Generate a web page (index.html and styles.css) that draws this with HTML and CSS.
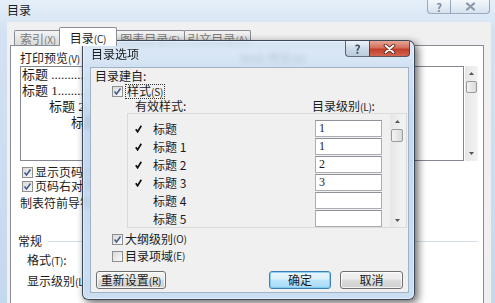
FILE: index.html
```html
<!DOCTYPE html>
<html lang="zh-CN">
<head>
  <meta charset="UTF-8">
  <title>目录</title>
  <link rel="stylesheet" href="styles.css">
</head>
<body>
  <div class="window">
    <div class="titlebar">
      <span class="title">目录</span>
      <div class="caption">
        <span class="cap help">?</span>
        <span class="cap close">
          <svg width="11" height="9" viewBox="0 0 11 9"><path d="M2 1.5 L9 7.5 M9 1.5 L2 7.5" stroke="#8a97a8" stroke-width="2.2" stroke-linecap="round"/></svg>
        </span>
      </div>
    </div>
    <div class="client">
      <div class="tabs">
        <span class="tab t1">索引<span class="key">(X)</span></span>
        <span class="tab active">目录<span class="key">(C)</span></span>
        <span class="tab t3">图表目录<span class="key">(F)</span></span>
        <span class="tab t4">引文目录<span class="key">(A)</span></span>
      </div>
      <div class="panel">
        <div class="preview-cols">
          <div class="col-print">
            <div class="label">打印预览<span class="key">(V)</span></div>
            <div class="preview">
              <div class="pline">标题 ..............................................</div>
              <div class="pline">标题 1...........................................</div>
              <div class="pline lv2">标题 2...................................</div>
              <div class="pline lv3">标题 3..............................</div>
            </div>
          </div>
          <div class="col-web">
            <div class="label">Web 预览<span class="key">(W)</span></div>
            <div class="web-row">
              <div class="preview web"></div>
              <div class="vscroll outer">
                <span class="arrow"><svg width="5" height="3" viewBox="0 0 5 3"><path d="M0 3 L2.5 0 L5 3Z" fill="#555"/></svg></span>
                <span class="thumb"></span>
                <span class="track"></span>
                <span class="arrow"><svg width="5" height="3" viewBox="0 0 5 3"><path d="M0 0 L2.5 3 L5 0Z" fill="#555"/></svg></span>
              </div>
            </div>
          </div>
        </div>
        <div class="options">
          <div class="check first"><span class="box"><svg width="9" height="9" viewBox="0 0 9 9"><path d="M1.5 4.5 L3.5 7 L7.5 1.5" fill="none" stroke="#3d5a8c" stroke-width="1.5"/></svg></span>显示页码<span class="key">(S)</span></div>
          <div class="check"><span class="box"><svg width="9" height="9" viewBox="0 0 9 9"><path d="M1.5 4.5 L3.5 7 L7.5 1.5" fill="none" stroke="#3d5a8c" stroke-width="1.5"/></svg></span>页码右对齐<span class="key">(R)</span></div>
          <div class="plain leader">制表符前导符<span class="key">(B)</span>:</div>
        </div>
        <div class="group">常规</div>
        <div class="field">格式<span class="key">(T)</span>:</div>
        <div class="field second">显示级别<span class="key">(L)</span>:</div>
      </div>
    </div>
  </div>

  <div class="dialog">
    <div class="dlg-title">
      <span class="dlg-name">目录选项</span>
      <div class="dlg-caption">
        <span class="dbtn help">?</span>
        <span class="dbtn close">
          <svg width="13" height="10" viewBox="0 0 13 10"><path d="M2.5 1.5 L10.5 8.5 M10.5 1.5 L2.5 8.5" stroke="#5a1d14" stroke-width="3.6" stroke-linecap="round"/><path d="M2.5 1.5 L10.5 8.5 M10.5 1.5 L2.5 8.5" stroke="#fff" stroke-width="1.9" stroke-linecap="round"/></svg>
        </span>
      </div>
    </div>
    <div class="dlg-body">
      <div class="plain">目录建自:</div>
      <div class="check indent tight"><span class="box"><svg width="9" height="9" viewBox="0 0 9 9"><path d="M1.5 4.5 L3.5 7 L7.5 1.5" fill="none" stroke="#3d5a8c" stroke-width="1.5"/></svg></span><span class="focus">样式<span class="key">(S)</span></span></div>
      <div class="cols-head"><span class="h-style">有效样式:</span><span>目录级别<span class="key">(L)</span>:</span></div>
      <div class="style-list">
        <div class="style-rows">
          <div class="srow"><span class="mark"><svg width="7" height="8" viewBox="0 0 7 8"><path d="M0.8 4.2 L2.6 6.8 L6.3 0.8" fill="none" stroke="#111" stroke-width="1.7"/></svg></span><span class="sname">标题</span><span class="level">1</span></div>
          <div class="srow"><span class="mark"><svg width="7" height="8" viewBox="0 0 7 8"><path d="M0.8 4.2 L2.6 6.8 L6.3 0.8" fill="none" stroke="#111" stroke-width="1.7"/></svg></span><span class="sname">标题 1</span><span class="level">1</span></div>
          <div class="srow"><span class="mark"><svg width="7" height="8" viewBox="0 0 7 8"><path d="M0.8 4.2 L2.6 6.8 L6.3 0.8" fill="none" stroke="#111" stroke-width="1.7"/></svg></span><span class="sname">标题 2</span><span class="level">2</span></div>
          <div class="srow"><span class="mark"><svg width="7" height="8" viewBox="0 0 7 8"><path d="M0.8 4.2 L2.6 6.8 L6.3 0.8" fill="none" stroke="#111" stroke-width="1.7"/></svg></span><span class="sname">标题 3</span><span class="level">3</span></div>
          <div class="srow"><span class="mark"></span><span class="sname">标题 4</span><span class="level"></span></div>
          <div class="srow"><span class="mark"></span><span class="sname">标题 5</span><span class="level"></span></div>
        </div>
        <div class="vscroll inner">
          <span class="arrow"><svg width="5" height="3" viewBox="0 0 5 3"><path d="M0 3 L2.5 0 L5 3Z" fill="#555"/></svg></span>
          <span class="thumb"></span>
          <span class="track"></span>
          <span class="arrow"><svg width="5" height="3" viewBox="0 0 5 3"><path d="M0 0 L2.5 3 L5 0Z" fill="#555"/></svg></span>
        </div>
      </div>
      <div class="check indent after-list"><span class="box"><svg width="9" height="9" viewBox="0 0 9 9"><path d="M1.5 4.5 L3.5 7 L7.5 1.5" fill="none" stroke="#3d5a8c" stroke-width="1.5"/></svg></span>大纲级别<span class="key">(O)</span></div>
      <div class="check indent next"><span class="box"></span>目录项域<span class="key">(E)</span></div>
      <div class="btn-row">
        <button class="btn reset">重新设置<span class="key">(R)</span></button>
        <button class="btn ok">确定</button>
        <button class="btn cancel">取消</button>
      </div>
    </div>
  </div>
</body>
</html>
```

FILE: styles.css
```css
* {
  box-sizing: border-box;
}

body {
  margin: 0;
  width: 495px;
  height: 303px;
  overflow: hidden;
  position: relative;
  font-family: "Noto Sans CJK SC", "Noto Sans", sans-serif;
  font-size: 12px;
  line-height: 14px;
  color: #1b1b1b;
  background: #c4d8ee;
}

/* accelerator keys such as (C) are narrow in the original font */
.key {
  font-size: 10px;
  letter-spacing: -0.2px;
}

/* outer window */
.window {
  height: 303px;
  display: flex;
  flex-direction: column;
  background: linear-gradient(180deg, #e6eff9 0%, #d3e2f3 10%, #c4d8ee 100%);
}

.titlebar {
  height: 22px;
  display: flex;
  padding: 0 5px 0 7px;
}

.titlebar .title {
  margin-top: 3px;
}

.caption {
  display: flex;
  margin-left: auto;
  height: 14px;
}

.cap {
  height: 14px;
  display: flex;
  align-items: center;
  justify-content: center;
  border: 1px solid rgba(86, 109, 140, 0.55);
  border-top: none;
  background: linear-gradient(#f3f7fb, #d6e2ef);
  color: #7d8a9c;
  font-weight: bold;
  font-size: 11px;
}

.cap.help {
  width: 23px;
  border-right: none;
  border-radius: 0 0 0 4px;
}

.cap.close {
  width: 40px;
  border-radius: 0 0 4px 0;
}

.client {
  flex: 1;
  margin: 0 4px 0 7px;
  background: #f0f0f0;
  display: flex;
  flex-direction: column;
  overflow: hidden;
}

/* tabs */
.tabs {
  height: 23px;
  display: flex;
  align-items: flex-end;
  padding-left: 7px;
}

.tab {
  height: 15px;
  padding-top: 1px;
  line-height: 13px;
  text-align: center;
  white-space: nowrap;
  border: 1px solid #898c95;
  border-bottom: none;
  border-radius: 2px 2px 0 0;
  margin-right: -1px;
  background: linear-gradient(#f4f4f4, #e6e6e6 50%, #d9d9d9);
  color: #7b7b7b;
}

.tab.t1 { width: 48px; }
.tab.t3 { width: 70px; }
.tab.t4 { width: 67px; }

.tab.active {
  width: 58px;
  height: 19px;
  padding-top: 2px;
  line-height: 16px;
  margin: 0 -2px -1px -2px;
  position: relative;
  z-index: 1;
  background: #fff;
  color: #1b1b1b;
}

.panel {
  flex: 1;
  margin-left: 3px;
  width: 474px;
  border: 1px solid #898c95;
  border-bottom: none;
  background: #fff;
  padding: 5px 0 0 9px;
  display: flex;
  flex-direction: column;
}

.preview-cols {
  display: flex;
}

.col-print {
  width: 218px;
}

.col-web {
  margin-left: 2px;
}

.label {
  height: 14px;
  white-space: nowrap;
}

.preview {
  margin-top: 1px;
  height: 95px;
  border: 1px solid #828790;
  background: #fff;
  padding-left: 1px;
  overflow: hidden;
  white-space: nowrap;
  font-family: "Liberation Serif", "Noto Sans CJK SC", serif;
  font-size: 13px;
  line-height: 16px;
}

.pline.lv2 { padding-left: 27px; }
.pline.lv3 { padding-left: 49px; }

.web-row {
  display: flex;
}

.preview.web {
  width: 224px;
}

/* scrollbars */
.vscroll {
  display: flex;
  flex-direction: column;
  background: linear-gradient(90deg, #e6e6e6, #f3f3f3);
}

.vscroll.outer {
  margin-top: 1px;
  margin-left: 1px;
  width: 13px;
  height: 95px;
}

.vscroll .arrow {
  height: 15px;
  display: flex;
  align-items: center;
  justify-content: center;
}

.vscroll .thumb {
  height: 12px;
  margin: 0 1px;
  border: 1px solid #9a9a9a;
  border-radius: 2px;
  background: linear-gradient(90deg, #f4f4f4, #dadada);
}

.vscroll .track {
  flex: 1;
}

/* checkboxes */
.options {
  padding-left: 2px;
}

.check {
  height: 14px;
  display: flex;
  align-items: center;
  white-space: nowrap;
}

.check.first {
  margin-top: 4px;
}

.box {
  width: 11px;
  height: 11px;
  margin-right: 2px;
  border: 1px solid #8f8f8f;
  background: linear-gradient(135deg, #d9d9d9, #fbfbfb);
  display: flex;
  align-items: center;
  justify-content: center;
}

.plain {
  height: 14px;
  white-space: nowrap;
}

.plain.leader {
  margin-top: 3px;
  margin-left: -2px;
}

.group {
  margin-top: 24px;
  margin-left: -2px;
  height: 14px;
  display: flex;
  align-items: center;
}

.group::after {
  content: "";
  flex: 1;
  margin: 0 5px 0 6px;
  border-top: 1px solid #d5dfe5;
}

.field {
  height: 14px;
  margin-top: 5px;
  padding-left: 7px;
}

.field.second {
  margin-top: 7px;
}

/* options dialog, floating above the window */
.dialog {
  position: absolute;
  left: 82px;
  top: 40px;
  width: 333px;
  height: 260px;
  border: 1px solid rgba(35, 45, 62, 0.85);
  border-radius: 7px 7px 6px 6px;
  padding: 0 5px 6px 7px;
  display: flex;
  flex-direction: column;
  background: linear-gradient(180deg, rgba(214, 229, 245, 0.86), rgba(188, 211, 236, 0.86) 30%, rgba(196, 218, 240, 0.88));
  backdrop-filter: blur(2.5px);
  box-shadow: 3px 3px 9px rgba(0, 0, 0, 0.6), inset 0 0 0 1px rgba(255, 255, 255, 0.45);
}

.dlg-title {
  height: 26px;
  display: flex;
  align-items: flex-start;
}

.dlg-name {
  margin: 6px 0 0 1px;
}

.dlg-caption {
  display: flex;
  margin-left: auto;
  margin-right: -1px;
}

.dbtn {
  height: 16px;
  display: flex;
  align-items: center;
  justify-content: center;
  border: 1px solid rgba(40, 52, 72, 0.7);
  border-top: none;
}

.dbtn.help {
  width: 24px;
  border-right: none;
  border-radius: 0 0 0 4px;
  background: linear-gradient(#eef3f9, #cbd8e7 55%, #bccbdd);
  color: #3f526b;
  font-weight: bold;
  font-size: 12px;
}

.dbtn.close {
  width: 41px;
  border-radius: 0 0 4px 0;
  background: linear-gradient(#e8a595, #d4705c 45%, #c13f29 55%, #d26650);
}

.dlg-body {
  flex: 1;
  border: 1px solid #9fb2c8;
  background: #f0f0f0;
  padding: 1px 5px 0 4px;
  display: flex;
  flex-direction: column;
}

.check.indent {
  padding-left: 17px;
}

.check.tight {
  margin-top: 1px;
}

.check .focus {
  border: 1px dotted #333;
  padding: 0 1px;
  line-height: 12px;
}

.cols-head {
  margin-top: 1px;
  height: 14px;
  padding-left: 40px;
  display: flex;
  white-space: nowrap;
}

.h-style {
  width: 177px;
}

.style-list {
  margin-left: 32px;
  width: 280px;
  height: 115px;
  border: 1px solid #dadada;
  display: flex;
}

.style-rows {
  flex: 1;
  padding-top: 6px;
}

.srow {
  height: 17px;
  margin-bottom: 1px;
  display: flex;
  align-items: center;
  padding: 0 8px 0 7px;
}

.mark {
  width: 18px;
  display: flex;
  align-items: center;
}

.sname {
  flex: 1;
}

.level {
  width: 67px;
  height: 17px;
  border: 1px solid #abadb3;
  border-top-color: #8e9198;
  background: #fff;
  padding-left: 3px;
  font-family: "Liberation Serif", serif;
  font-size: 12px;
  line-height: 15px;
}

.vscroll.inner {
  width: 14px;
  margin-right: 2px;
}

.vscroll.inner .arrow {
  height: 14px;
}

.vscroll.inner .thumb {
  height: 13px;
  margin-top: 1px;
}

.check.after-list {
  margin-top: 4px;
}

.check.next {
  margin-top: 3px;
}

.btn-row {
  margin-top: 8px;
  height: 18px;
  display: flex;
  padding-left: 1px;
}

.btn {
  height: 18px;
  padding: 0;
  font-family: inherit;
  font-size: 12px;
  line-height: 16px;
  white-space: nowrap;
  color: #1b1b1b;
  border: 1px solid #707070;
  border-radius: 3px;
  background: linear-gradient(#f3f3f3, #ebebeb 45%, #dddddd 50%, #cfcfcf);
  box-shadow: inset 0 0 0 1px rgba(255, 255, 255, 0.75);
}

.btn.reset {
  width: 70px;
}

.btn.ok {
  width: 62px;
  margin-left: auto;
  border-color: #3c7fb1;
  background: linear-gradient(#eaf6fd, #d9f0fc 45%, #bee6fd 50%, #a7d9f5);
  box-shadow: inset 0 0 0 1px rgba(120, 200, 240, 0.8);
}

.btn.cancel {
  width: 63px;
  margin-left: 9px;
}
```
